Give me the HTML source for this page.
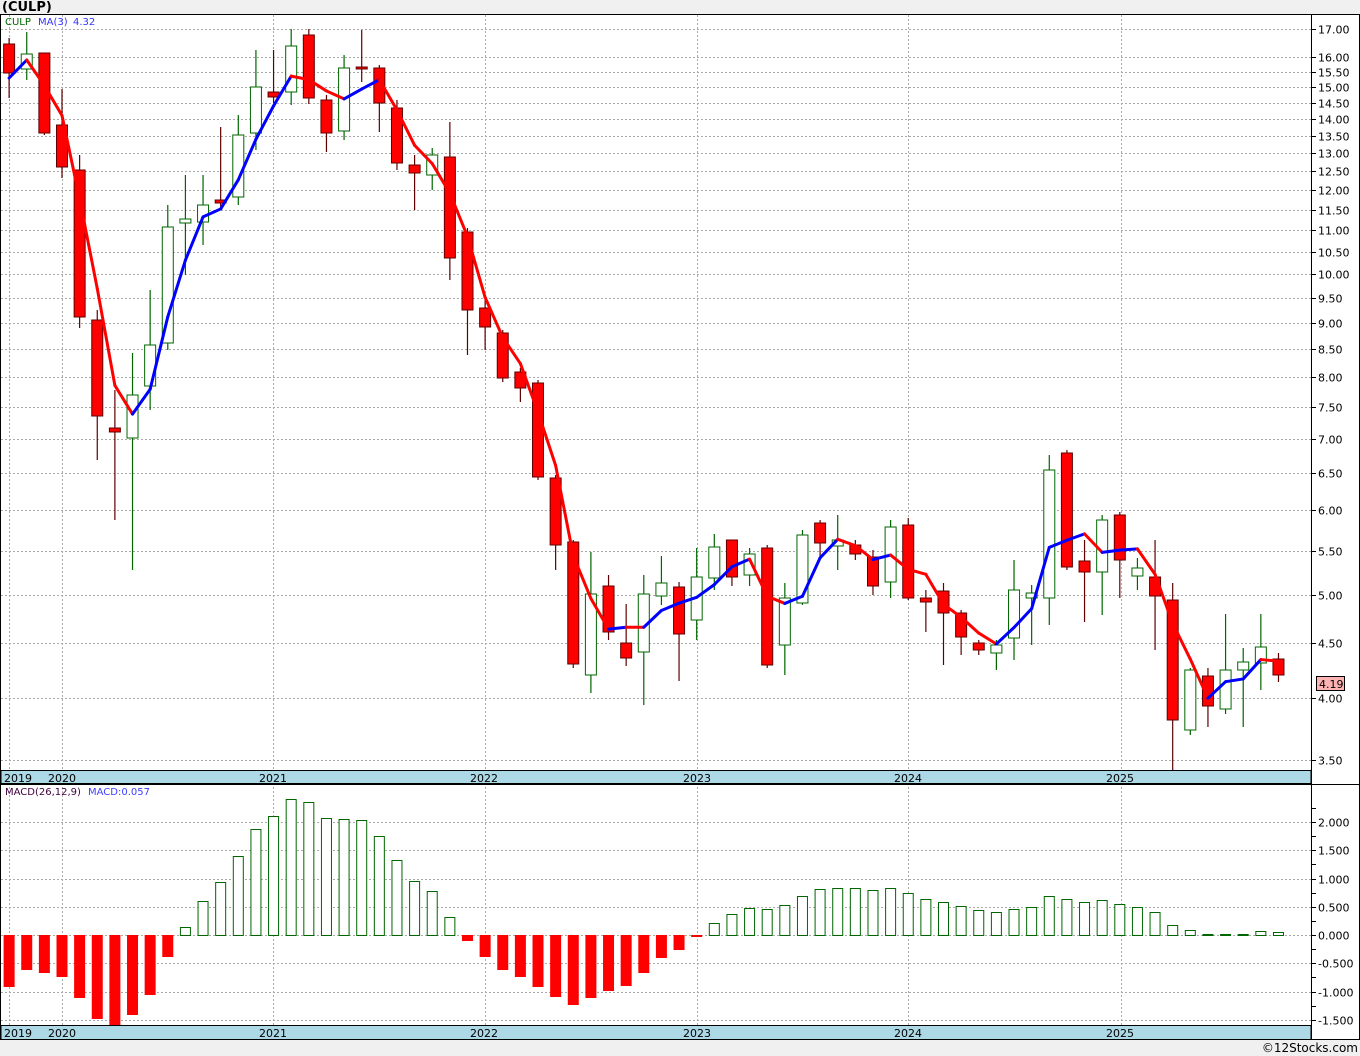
<!DOCTYPE html>
<html><head><meta charset="utf-8"><style>
html,body{margin:0;padding:0;background:#f0f0f0;width:1360px;height:1056px;overflow:hidden}
svg{display:block}
text{font-family:"DejaVu Sans","Liberation Sans",sans-serif;font-size:11px}
</style></head><body>
<svg id="s" width="1360" height="1056" xmlns="http://www.w3.org/2000/svg">
<rect x="0" y="0" width="1360" height="1056" fill="#f0f0f0"/>
<text x="2" y="11" style="font-weight:bold;font-size:13px" fill="#000">(CULP)</text>
<rect x="0.5" y="14.5" width="1310" height="1025" fill="#fff"/>
<rect x="1311" y="14" width="49" height="1026" fill="#fff"/>
<g id="grid"></g>
<g id="bars"></g>
<g id="cand"></g>
<g id="ma"></g>
<rect x="1" y="770.5" width="1310" height="13" fill="#add8e6" stroke="#000" stroke-width="1"/>
<rect x="1" y="1025.5" width="1310" height="14" fill="#add8e6" stroke="#000" stroke-width="1"/>
<line x1="0" y1="784.5" x2="1360" y2="784.5" stroke="#000"/>
<line x1="1311.5" y1="14" x2="1311.5" y2="1040" stroke="#000"/>
<rect x="0.5" y="14.5" width="1359" height="1025" fill="none" stroke="#000"/>
<g id="axis"></g>
<text x="4" y="782" fill="#000">2019</text>
<text x="48" y="782" fill="#000">2020</text>
<text x="259" y="782" fill="#000">2021</text>
<text x="470" y="782" fill="#000">2022</text>
<text x="683" y="782" fill="#000">2023</text>
<text x="894" y="782" fill="#000">2024</text>
<text x="1106" y="782" fill="#000">2025</text>
<text x="4" y="1037" fill="#000">2019</text>
<text x="48" y="1037" fill="#000">2020</text>
<text x="259" y="1037" fill="#000">2021</text>
<text x="470" y="1037" fill="#000">2022</text>
<text x="683" y="1037" fill="#000">2023</text>
<text x="894" y="1037" fill="#000">2024</text>
<text x="1106" y="1037" fill="#000">2025</text>
<text x="5" y="25" style="font-size:10px" fill="#006600">CULP</text>
<text x="38" y="25" style="font-size:10px" fill="#3333ff">MA(3)</text>
<text x="73" y="25" style="font-size:10px" fill="#3333ff">4.32</text>
<text x="5" y="795" style="font-size:10px" fill="#400040">MACD(26,12,9)</text>
<text x="88" y="795" style="font-size:10px" fill="#4040ff">MACD:0.057</text>
<rect x="1316.5" y="676.5" width="28" height="14" fill="#ffb4b4" stroke="#000"/>
<text x="1319" y="688" fill="#000">4.19</text>
<text x="1358" y="1052" text-anchor="end" style="font-size:12px" fill="#000">©12Stocks.com</text>
</svg>
<script>
var NS="http://www.w3.org/2000/svg";
function el(p,t,a){var e=document.createElementNS(NS,t);for(var k in a)e.setAttribute(k,a[k]);document.getElementById(p).appendChild(e);return e;}
function py(p){return 29+(Math.log(17)-Math.log(p))*462.3;}
function yp(y){return Math.exp(Math.log(17)-(y-29)/462.3);}
function cx(m){return 62+m*17.63;}
var prices=[17,16,15.5,15,14.5,14,13.5,13,12.5,12,11.5,11,10.5,10,9.5,9,8.5,8,7.5,7,6.5,6,5.5,5,4.5,4,3.5];
prices.forEach(function(p){var y=Math.round(py(p))+0.5;
 el("grid","line",{x1:1,y1:y,x2:1311,y2:y,stroke:"#aaa","stroke-dasharray":"2,2"});
 el("axis","line",{x1:1311,y1:y,x2:1316,y2:y,stroke:"#000"});
 var t=el("axis","text",{x:1318,y:y+4,fill:"#000"});t.textContent=p.toFixed(2);});
[2,1.5,1,0.5,0,-0.5,-1,-1.5].forEach(function(v){var y=Math.round(935-v*56.5)+0.5;
 el("grid","line",{x1:1,y1:y,x2:1311,y2:y,stroke:"#aaa","stroke-dasharray":"2,2"});
 el("axis","line",{x1:1311,y1:y,x2:1316,y2:y,stroke:"#000"});
 var t=el("axis","text",{x:1318,y:y+4,fill:"#000"});t.textContent=v.toFixed(3);});
[-0.25,0.25,0.75,1.25,1.75,2.25,-0.75,-1.25].forEach(function(v){var y=Math.round(935-v*56.5)+0.5;
 el("axis","line",{x1:1311,y1:y,x2:1316,y2:y,stroke:"#000"});});
[9,62,273,485,697,908,1121].forEach(function(x){
 el("grid","line",{x1:x+0.5,y1:15,x2:x+0.5,y2:1040,stroke:"#aaa","stroke-dasharray":"2,2"});});
var C=[
["r",44,73,38,98],["w",54,69,32,80],["r",53,133,53,135],["r",125,167,89,178],["r",170,317,155,328],
["r",320,416,310,460],["r",428,432,390,520],["w",395,438,353,570],["w",345,386,290,410],["w",227,343,205,350],
["w",219,223,175,275],["w",205,222,175,245],["r",200,203,127,210],["w",135,197,115,205],["w",87,133,50,150],
["r",92,97,50,103],["w",46,92,29,105],["r",35,98,29,104],["r",100,133,95,152],["w",68,131,55,140],
["r",67,69,30,82],["r",68,103,65,132],["r",108,163,100,170],["r",165,173,155,210],["w",155,175,148,190],
["r",157,258,122,280],["r",232,310,228,355],["r",308,327,296,350],["r",333,378,330,382],["r",372,388,368,402],
["r",383,477,380,480],["r",478,545,475,570],["r",542,664,540,668],["w",594,675,552,693],["r",586,632,575,640],
["r",643,658,604,666],["w",594,652,575,705],["w",583,596,556,605],["r",587,634,582,681],["w",577,620,548,640],
["w",547,578,534,590],["r",540,577,540,586],["w",554,575,548,586],["r",548,665,545,668],["w",598,645,583,675],
["w",535,603,530,605],["r",523,543,520,560],["w",540,546,515,570],["r",545,554,540,560],["r",557,586,550,595],
["w",527,582,520,598],["r",525,598,518,600],["r",598,602,590,632],["r",591,613,583,665],["r",613,637,610,655],
["r",643,650,640,655],["w",645,653,640,670],["w",590,638,560,660],["w",593,598,585,645],["w",470,598,455,625],
["r",453,567,450,570],["r",561,572,540,622],["w",520,572,515,615],["r",515,560,512,598],["w",568,576,558,590],
["r",577,596,540,650],["r",600,720,583,770],["w",670,730,668,735],["r",676,706,668,727],["w",670,709,614,714],
["w",662,670,648,727],["w",647,663,614,690],["r",659,675,653,682]];
var closes=[];
C.forEach(function(c,i){var m=i-3,x=cx(m);var red=c[0]=="r";
 var wc=red?"#600000":"#006600";
 el("cand","line",{x1:x,y1:c[3],x2:x,y2:Math.min(c[4],770),stroke:wc,"stroke-width":1.2});
 el("cand","rect",{x:x-5.5,y:c[1],width:11,height:Math.max(c[2]-c[1],2),fill:red?"#ff0000":"#fff",stroke:red?"#600000":"#006600","stroke-width":1});
 closes.push(yp(red?c[2]:c[1]));});
var ma=[];for(var i=0;i<closes.length;i++){var s=0,n=0;for(var j=Math.max(0,i-2);j<=i;j++){s+=closes[j];n++;}ma.push(s/n);}
ma[0]=yp(78);ma[1]=yp(60);
for(var i=1;i<ma.length;i++){el("ma","line",{x1:cx(i-4),y1:py(ma[i-1]),x2:cx(i-3),y2:py(ma[i]),stroke:ma[i]>=ma[i-1]?"#0000ff":"#ff0000","stroke-width":3,"stroke-linecap":"round"});}
var M=[987,970,973,977,998,1019,1025,1015,995,957,927,901,882,856,829,816,799,802,818,819,820,836,860,881,891,917,941,957,970,977,987,997,1005,998,991,986,973,958,950,937,
923,914,908,909,905,896,889,888,888,890,888,893,899,902,906,910,912,909,907,896,899,902,900,904,907,912,925,930,934,934,934,931,932];
M.forEach(function(v,i){var x=cx(i-3);
 if(v>935){el("bars","rect",{x:x-5.5,y:935,width:11,height:v-935,fill:"#ff0000"});}
 else{el("bars","rect",{x:x-5,y:v+0.5,width:10,height:Math.max(935-v,1),fill:"#fff",stroke:"#006600","stroke-width":1});}});
</script>
</body></html>
